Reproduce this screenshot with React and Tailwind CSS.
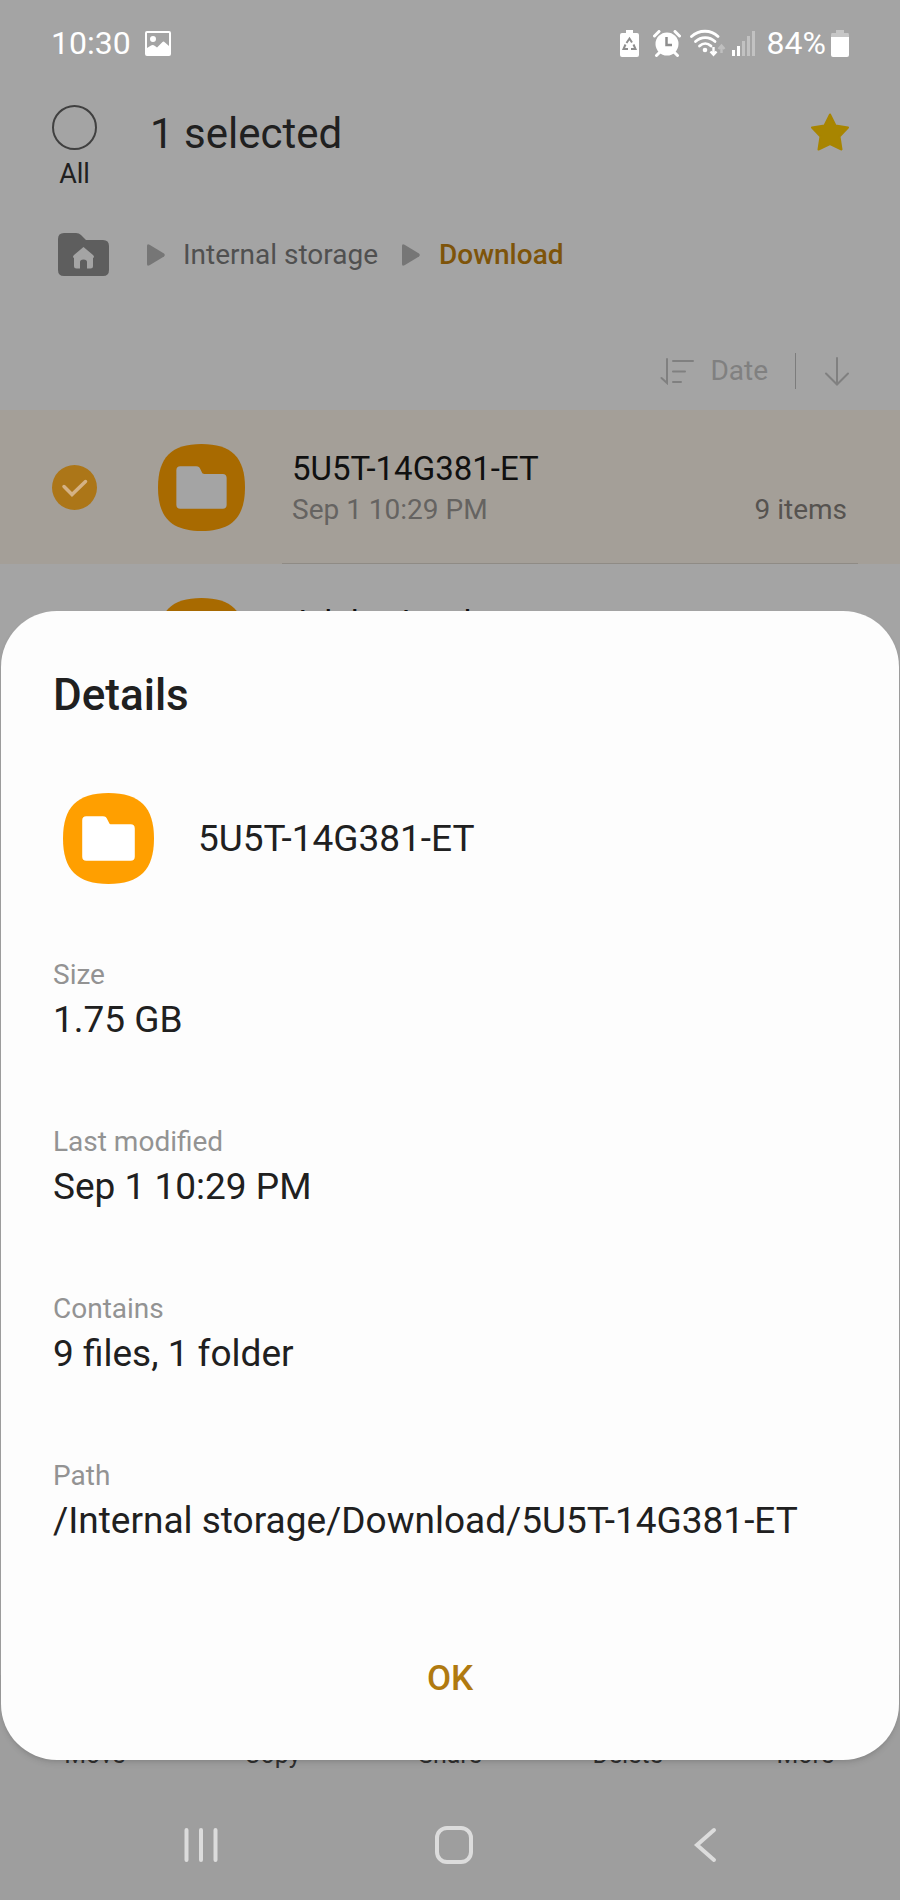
import { useState } from "react";

const DETAILS = [
  { label: "Size", value: "1.75 GB" },
  { label: "Last modified", value: "Sep 1 10:29 PM" },
  { label: "Contains", value: "9 files, 1 folder" },
  { label: "Path", value: "/Internal storage/Download/5U5T-14G381-ET" },
];

const ACTIONS = ["Move", "Copy", "Share", "Delete", "More"];

function FolderIcon({ className, bg, fg }) {
  return (
    <svg viewBox="0 0 90 90" className={className} aria-hidden="true">
      <path fill={bg} d="M45 0C76 0 90 14 90 45S76 90 45 90 0 76 0 45 14 0 45 0Z" />
      <path fill={fg} d="M23 23H39.500C42 23 43 24 44 26.500L45.500 29.500C46 30.500 46.500 31 48 31H67C69.500 31 71 32.500 71 35V63C71 65.500 69.500 67 67 67H23C20.500 67 19 65.500 19 63V27C19 24.500 20.500 23 23 23Z" />
    </svg>
  );
}

function StatusBar() {
  return (
    <div className="flex items-center justify-between pl-[51px] pr-[51px] pt-[23px] text-white">
      <div className="flex items-center gap-[14px]">
        <span className="text-[32px] leading-10">10:30</span>
        <svg viewBox="0 0 26 25" className="w-[26px] h-[25px]" aria-hidden="true">
          <path fill="currentColor" fillRule="evenodd" d="M2 0H24Q26 0 26 2V23Q26 25 24 25H2Q0 25 0 23V2Q0 0 2 0ZM2 2V17L6 14.500Q8 13.500 10 15L12 16.500 17.500 11Q18.500 10 20 11.500L24 15V2ZM8 5A3 3 0 1 1 8 11 3 3 0 1 1 8 5Z" />
        </svg>
      </div>
      <div className="flex items-center">
        <svg viewBox="0 0 19 27" className="w-[19px] h-[27px] mr-[14px]" aria-hidden="true">
          <path fill="currentColor" d="M6 0H13V3H17Q19 3 19 5V25Q19 27 17 27H2Q0 27 0 25V5Q0 3 2 3H6Z" />
          <g fill="none" stroke="#8e8e8e" strokeWidth="2">
            <path d="M6.500 13L9.500 8.500 12 12.500M13.500 14.500L15.500 19H11M8 19H3.500L5.500 14.500" />
          </g>
        </svg>
        <svg viewBox="0 0 28 27" className="w-7 h-[27px] mr-[9px]" aria-hidden="true">
          <circle cx="14" cy="14" r="11.500" fill="currentColor" />
          <path d="M1.500 6L6 1.500M26.500 6L22 1.500M3.500 25.500L7 22M24.500 25.500L21 22" stroke="currentColor" strokeWidth="3" strokeLinecap="round" />
          <path d="M13.500 7V15H19" fill="none" stroke="#8e8e8e" strokeWidth="2.500" />
        </svg>
        <svg viewBox="0 0 36 28" className="w-9 h-7 mr-[6px]" aria-hidden="true">
          <g fill="none" stroke="currentColor" strokeWidth="2.800" strokeLinecap="round">
            <path d="M1.500 7.500C9 .5 21 .5 28 7.500" />
            <path d="M5.500 12.500C11 7.300 19.500 7.300 25 12.500" />
            <path d="M9.500 17C13 13.800 17.500 13.800 21 17" />
          </g>
          <circle cx="15" cy="21" r="2.300" fill="currentColor" />
          <path d="M23.500 18V25M20.500 22.500L23.500 25.800 26.500 22.500" fill="none" stroke="currentColor" strokeWidth="2.400" />
          <path d="M31.500 24V18M28.500 20L31.500 16.500 34.500 20" fill="none" stroke="#bfbfbf" strokeWidth="2.400" />
        </svg>
        <svg viewBox="0 0 24 26" className="w-6 h-[26px] mr-[11px]" aria-hidden="true">
          <path fill="currentColor" d="M0 20H3V26H0ZM5 16H8V26H5Z" />
          <path fill="#c2c2c2" d="M10 11H13V26H10ZM15 6H18V26H15ZM20 1H23V26H20Z" />
        </svg>
        <span className="text-[32px] leading-10">84%</span>
        <svg viewBox="0 0 18 27" className="w-[18px] h-[27px] ml-[5px]" aria-hidden="true">
          <path fill="#c6c6c6" d="M5 0H13V3H17Q18 3 18 5V8H0V5Q0 3 1 3H5Z" />
          <path fill="currentColor" d="M0 7H18V25Q18 27 16 27H2Q0 27 0 25Z" />
        </svg>
      </div>
    </div>
  );
}

function Crumb() {
  return (
    <svg viewBox="0 0 18 22" className="w-[18px] h-[22px]" aria-hidden="true">
      <path fill="#767676" d="M0 2Q0 -.5 2.500 .8L17 9.500Q18.500 11 17 12.500L2.500 21.200Q0 22.500 0 20Z" />
    </svg>
  );
}

function Header() {
  const [all, setAll] = useState(false);
  return (
    <header>
      <div className="flex items-start pl-[52px] pr-[51px] pt-[42px]">
        <label className="flex flex-col items-center w-[45px]">
          <input type="checkbox" checked={all} onChange={e => setAll(e.target.checked)}
            className="appearance-none w-[45px] h-[45px] rounded-full border-2 border-[#404040] checked:bg-[#ac7618]" />
          <span className="text-[27px] leading-8 mt-2 text-[#202020]">All</span>
        </label>
        <h1 className="flex-1 ml-[53px] mt-[5px] text-[42px] leading-12 text-[#202020]">1 selected</h1>
        <button aria-label="Favorite" className="mt-2">
          <svg viewBox="0 0 38 38" className="w-[38px] h-[38px]">
            <path fill="#a88500" stroke="#a88500" strokeWidth="2" strokeLinejoin="round" d="M19 1.500L24.500 12.500 37 14.500 28.500 23.500 30.500 36.500 19 31 7.500 36.500 9.500 23.500 1 14.500 13.500 12.500Z" />
          </svg>
        </button>
      </div>
      <nav className="flex items-center pl-[58px] mt-[43px] text-[28px] leading-10">
        <a href="#home" aria-label="Home">
          <svg viewBox="0 0 51 43" className="w-[51px] h-[43px]">
            <path fill="#5e5e5e" d="M6 0H18Q21 0 23 2L28 7H45Q51 7 51 13V37Q51 43 45 43H6Q0 43 0 37V6Q0 0 6 0Z" />
            <path fill="#a4a4a4" d="M25.500 14L35 22Q37 24 35 25V33Q35 35.500 32.500 35.500H29V29Q29 26.500 25.500 26.500T22 29V35.500H18.500Q16 35.500 16 33V25Q14 24 16 22Z" />
          </svg>
        </a>
        <span className="ml-[38px]"><Crumb /></span>
        <a href="#internal" className="ml-[18px] text-[#505050]">Internal storage</a>
        <span className="ml-6"><Crumb /></span>
        <a href="#download" className="ml-[19px] font-medium text-[#7e540a]">Download</a>
      </nav>
      <div className="flex items-center justify-end pr-[50px] mt-[75px] mb-[19px] text-[#808080]">
        <button className="flex items-center gap-4 text-[28px] leading-10">
          <svg viewBox="0 0 34 28" className="w-[34px] h-7" fill="none" stroke="currentColor" strokeWidth="2" strokeLinecap="round" aria-hidden="true">
            <path d="M7 2V26L1.500 21M13 4H33M13 14.500H25M13 25H21" />
          </svg>
          Date
        </button>
        <span className="w-px h-9 ml-[27px] mr-7 bg-[#7c7c7c]" />
        <button aria-label="Sort descending">
          <svg viewBox="0 0 26 30" className="w-[26px] h-[30px]" fill="none" stroke="currentColor" strokeWidth="2" strokeLinecap="round">
            <path d="M13 2V28M2 17.500L13 28.500 24 17.500" />
          </svg>
        </button>
      </div>
    </header>
  );
}

function FileRow({ name, date, items, selected }) {
  return (
    <li className={`flex items-center h-[154px] pl-[52px] ${selected ? "bg-[#a49f98]" : ""}`}>
      <span className="w-[45px]">
        {selected && (
          <svg viewBox="0 0 45 45" className="w-[45px] h-[45px]" aria-label="Selected">
            <circle cx="22.500" cy="22.500" r="22.500" fill="#ac7618" />
            <path d="M12 21.500L20 29.500 33.500 16.500" fill="none" stroke="#d4b285" strokeWidth="3.500" strokeLinecap="round" />
          </svg>
        )}
      </span>
      <FolderIcon className="w-[87px] h-[87px] ml-[61px]" bg="#a86a00" fg="#a4a4a4" />
      <div className="flex flex-1 items-end h-full ml-[37px] mr-[42px] pl-[10px] pr-[11px] pb-[33px] border-b border-[#8f8b85]">
        <div className="flex-1">
          <p className="text-[33px] leading-10 text-[#101010]">{name}</p>
          <p className="mt-px text-[28px] leading-10 text-[#656361]">{date}</p>
        </div>
        <p className="text-[28px] leading-10 text-[#565350]">{items}</p>
      </div>
    </li>
  );
}

function NavBar() {
  return (
    <nav className="flex items-center justify-between h-[110px] pl-[182px] pr-[175px] text-[#dcdcdc]">
      <button aria-label="Recents">
        <svg viewBox="0 0 38 38" className="w-[38px] h-[38px]" stroke="currentColor" strokeWidth="4" strokeLinecap="round">
          <path d="M4.500 4V34M19 4V34M33.500 4V34" />
        </svg>
      </button>
      <button aria-label="Home">
        <svg viewBox="0 0 38 38" className="w-[38px] h-[38px]" fill="none" stroke="currentColor" strokeWidth="4">
          <rect x="2" y="2" width="34" height="34" rx="10" />
        </svg>
      </button>
      <button aria-label="Back">
        <svg viewBox="0 0 38 38" className="w-[38px] h-[38px]" fill="none" stroke="currentColor" strokeWidth="4" strokeLinecap="round">
          <path d="M27 4L10 19 27 34" />
        </svg>
      </button>
    </nav>
  );
}

function DetailsDialog({ onClose }) {
  return (
    <section role="dialog" aria-labelledby="details-title"
      className="flex flex-col mx-px px-[52px] pt-[60px] pb-[51px] rounded-[56px] bg-[#fdfdfd] text-[#202020] shadow-md">
      <h2 id="details-title" className="text-[44px] leading-12 font-medium">Details</h2>
      <div className="flex items-center gap-11 mt-[74px] ml-[10px]">
        <FolderIcon className="w-[91px] h-[91px]" bg="#ff9f00" fg="#ffffff" />
        <p className="text-[37px] leading-12">5U5T-14G381-ET</p>
      </div>
      <dl className="mt-[71px] space-y-[78px]">
        {DETAILS.map(d => (
          <div key={d.label}>
            <dt className="text-[28px] leading-10 text-[#939393]">{d.label}</dt>
            <dd className="mt-px text-[37px] leading-12">{d.value}</dd>
          </div>
        ))}
      </dl>
      <button onClick={onClose} className="self-center mt-[104px] px-10 text-[35px] leading-[60px] font-medium text-[#b07a10]">
        OK
      </button>
    </section>
  );
}

export default function App() {
  const [open, setOpen] = useState(true);
  return (
    <div className="relative flex flex-col min-h-screen bg-[#a4a4a4] font-['Roboto',sans-serif]">
      <StatusBar />
      <Header />
      <ul className="flex-1">
        <FileRow name="5U5T-14G381-ET" date="Sep 1 10:29 PM" items="9 items" selected />
        <FileRow name="Adobe Acrobat" date="Aug 28 9:14 AM" items="2 items" />
      </ul>
      <footer className="bg-[#9e9e9e]">
        <div className="grid grid-cols-5 px-[6px] pt-16 pb-[19px] text-[25px] leading-8 text-[#303030]">
          {ACTIONS.map(a => <button key={a}>{a}</button>)}
        </div>
        <NavBar />
      </footer>

      {/* Details sheet over the file list */}
      {open && (
        <div className="absolute inset-0 flex flex-col justify-end pb-[140px]">
          <DetailsDialog onClose={() => setOpen(false)} />
        </div>
      )}
    </div>
  );
}
